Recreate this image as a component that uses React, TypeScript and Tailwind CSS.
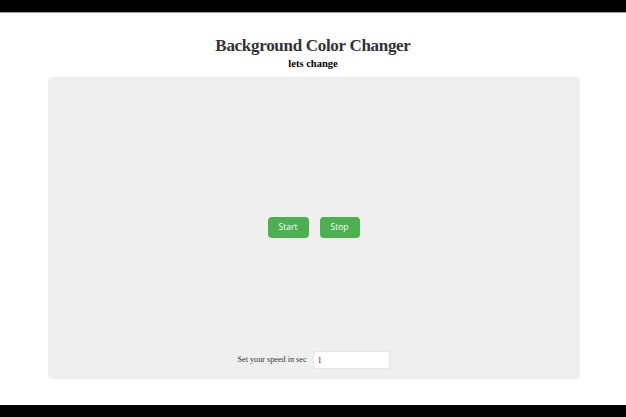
export default function App() {
  return (
    <div className="flex h-[417px] w-[626px] flex-col bg-white" style={{ fontFamily: '"Liberation Serif", serif' }}>
      <div className="h-[12px] bg-black" />
      <div className="h-px bg-[#9a9a9a]" />
      <div className="flex flex-1 flex-col items-center">
        <h1 className="mt-[22px] text-[17px] font-bold leading-[22px] tracking-[-0.3px] text-[#333]">
          Background Color Changer
        </h1>
        <h2 className="mt-0 text-[10.5px] font-bold leading-[13px] text-black">lets change</h2>
        <div className="ml-px mt-[7px] flex h-[302px] w-[532px] flex-col items-center rounded-[4px] bg-[#efefef]">
          <div className="mt-[140px] flex gap-[11px]">
            <button
              className="h-[21px] w-[41px] rounded-[4px] bg-[#4caf50] text-[8.5px] text-white"
              style={{ fontFamily: '"Open Sans", sans-serif' }}
            >
              Start
            </button>
            <button
              className="h-[21px] w-[40px] rounded-[4px] bg-[#4caf50] text-[8.5px] text-white"
              style={{ fontFamily: '"Open Sans", sans-serif' }}
            >
              Stop
            </button>
          </div>
          <div className="mt-auto mb-[10px] flex items-center gap-[6px]">
            <label className="text-[8.2px] text-[#333]">Set your speed in sec</label>
            <input
              defaultValue="1"
              className="h-[18px] w-[77px] rounded-[3px] border border-[#e4e4e4] bg-white px-[4px] text-[8.5px] text-[#333] outline-none"
            />
          </div>
        </div>
      </div>
      <div className="h-[12px] bg-black" />
    </div>
  );
}
